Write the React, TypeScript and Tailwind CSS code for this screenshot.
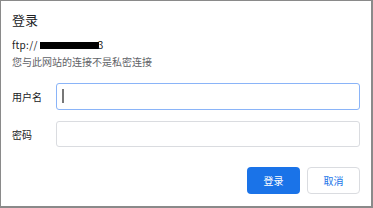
import React from 'react';

export default function App() {
  return (
    <div
      className="w-[373px] h-[208px] bg-white border-l border-t border-r-2 border-b-2 border-[#8a8a8a] relative overflow-hidden"
      style={{ fontFamily: '"Noto Sans CJK SC", "Noto Sans", sans-serif' }}
    >
      <div className="px-[11px] pt-[9px]">
        <h1 className="text-[13px] leading-[20px] text-[#202124]">登录</h1>
        <div className="mt-[8px] flex items-center text-[10px] leading-[14px] text-[#202124]">
          <span className="tracking-[0.3px]">ftp://</span>
          <span className="inline-block ml-[2px] w-[59px] h-[7px] bg-black"></span>
          <span className="-ml-[1px]">3</span>
        </div>
        <p className="mt-[3px] text-[10px] leading-[14px] text-[#5f6368]">您与此网站的连接不是私密连接</p>
      </div>

      <div className="mt-[14px] px-[11px] flex flex-col gap-[11px]">
        <div className="flex items-center">
          <label className="w-[44px] text-[10px] text-[#202124]">用户名</label>
          <div className="relative w-[304px] h-[27px] rounded-[3px] border border-[#8ab4f8] bg-white">
            <span className="absolute left-[5px] top-[5px] w-[2px] h-[14px] bg-[#777]"></span>
          </div>
        </div>
        <div className="flex items-center">
          <label className="w-[44px] text-[10px] text-[#202124]">密码</label>
          <div className="w-[304px] h-[26px] rounded-[3px] border border-[#dadce0] bg-white"></div>
        </div>
      </div>

      <div className="mt-[20px] pr-[11px] flex justify-end gap-[7px]">
        <button className="w-[53px] h-[27px] rounded-[4px] bg-[#1a73e8] text-white text-[10px]">登录</button>
        <button className="w-[53px] h-[27px] rounded-[4px] border border-[#dadce0] bg-white text-[#1a73e8] text-[10px]">取消</button>
      </div>
    </div>
  );
}
